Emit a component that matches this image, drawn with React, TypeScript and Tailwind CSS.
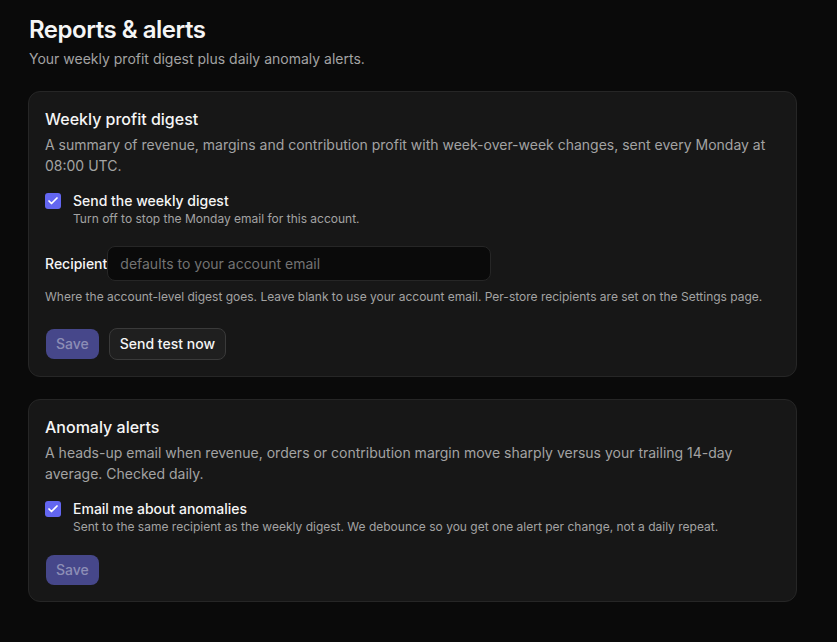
import { Check } from "lucide-react";

function Checkbox() {
  return (
    <span className="mt-[2px] flex h-4 w-4 shrink-0 items-center justify-center rounded-[3px] bg-[#6366f1]">
      <Check className="h-3 w-3 text-white" strokeWidth={3.5} />
    </span>
  );
}

export default function App() {
  return (
    <main
      className="min-h-screen bg-[#0a0a0a] text-[#f5f5f5]"
      style={{ fontFamily: "Inter, 'Noto Sans', sans-serif" }}
    >
      <div className="max-w-[797px] pl-7 pt-[14px] pb-10">
        <h1 className="pl-px text-2xl font-semibold leading-8 tracking-[-0.02em]">
          Reports &amp; alerts
        </h1>
        <p className="mt-[3px] pl-px text-sm leading-5 text-[#a3a3a3]">
          Your weekly profit digest plus daily anomaly alerts.
        </p>

        <section className="mt-[22px] rounded-xl border border-[#262626] bg-[#171717] px-4 pt-[15px] pb-4">
          <h2 className="text-base font-medium leading-6">Weekly profit digest</h2>
          <p className="mt-[3px] text-sm leading-[21px] text-[#a3a3a3]">
            A summary of revenue, margins and contribution profit with week-over-week
            changes, sent every Monday at 08:00 UTC.
          </p>

          <label className="mt-[15px] flex items-start gap-3">
            <Checkbox />
            <span className="flex flex-col">
              <span className="text-sm font-medium leading-5">Send the weekly digest</span>
              <span className="text-xs leading-4 text-[#a3a3a3]">
                Turn off to stop the Monday email for this account.
              </span>
            </span>
          </label>

          <div className="mt-[19px] flex items-center">
            <span className="text-sm font-medium">Recipient</span>
            <input
              placeholder="defaults to your account email"
              className="h-[35px] w-[384px] rounded-lg border border-[#262626] bg-[#0a0a0a] px-3 text-sm text-[#f5f5f5] outline-none placeholder:text-[#737373]"
            />
          </div>
          <p className="mt-[8px] text-xs leading-4 text-[#a3a3a3]">
            Where the account-level digest goes. Leave blank to use your account email.
            Per-store recipients are set on the Settings page.
          </p>

          <div className="mt-[23px] flex items-center gap-[10px]">
            <button
              disabled
              className="ml-px h-[30px] rounded-lg bg-[#46478a] px-[10px] text-sm font-medium text-[#8d8eb6]"
            >
              Save
            </button>
            <button className="h-[32px] rounded-lg border border-[#3a3a3a] bg-[#1f1f1f] px-[10px] text-sm font-medium text-[#f5f5f5]">
              Send test now
            </button>
          </div>
        </section>

        <section className="mt-[22px] rounded-xl border border-[#262626] bg-[#171717] px-4 pt-[15px] pb-4">
          <h2 className="text-base font-medium leading-6">Anomaly alerts</h2>
          <p className="mt-[3px] text-sm leading-[21px] text-[#a3a3a3]">
            A heads-up email when revenue, orders or contribution margin move sharply
            versus your trailing 14-day average. Checked daily.
          </p>

          <label className="mt-[15px] flex items-start gap-3">
            <Checkbox />
            <span className="flex flex-col">
              <span className="text-sm font-medium leading-5">Email me about anomalies</span>
              <span className="text-xs leading-4 text-[#a3a3a3]">
                Sent to the same recipient as the weekly digest. We debounce so you get one
                alert per change, not a daily repeat.
              </span>
            </span>
          </label>

          <div className="mt-[20px] flex items-center">
            <button
              disabled
              className="ml-px h-[30px] rounded-lg bg-[#46478a] px-[10px] text-sm font-medium text-[#8d8eb6]"
            >
              Save
            </button>
          </div>
        </section>
      </div>
    </main>
  );
}
